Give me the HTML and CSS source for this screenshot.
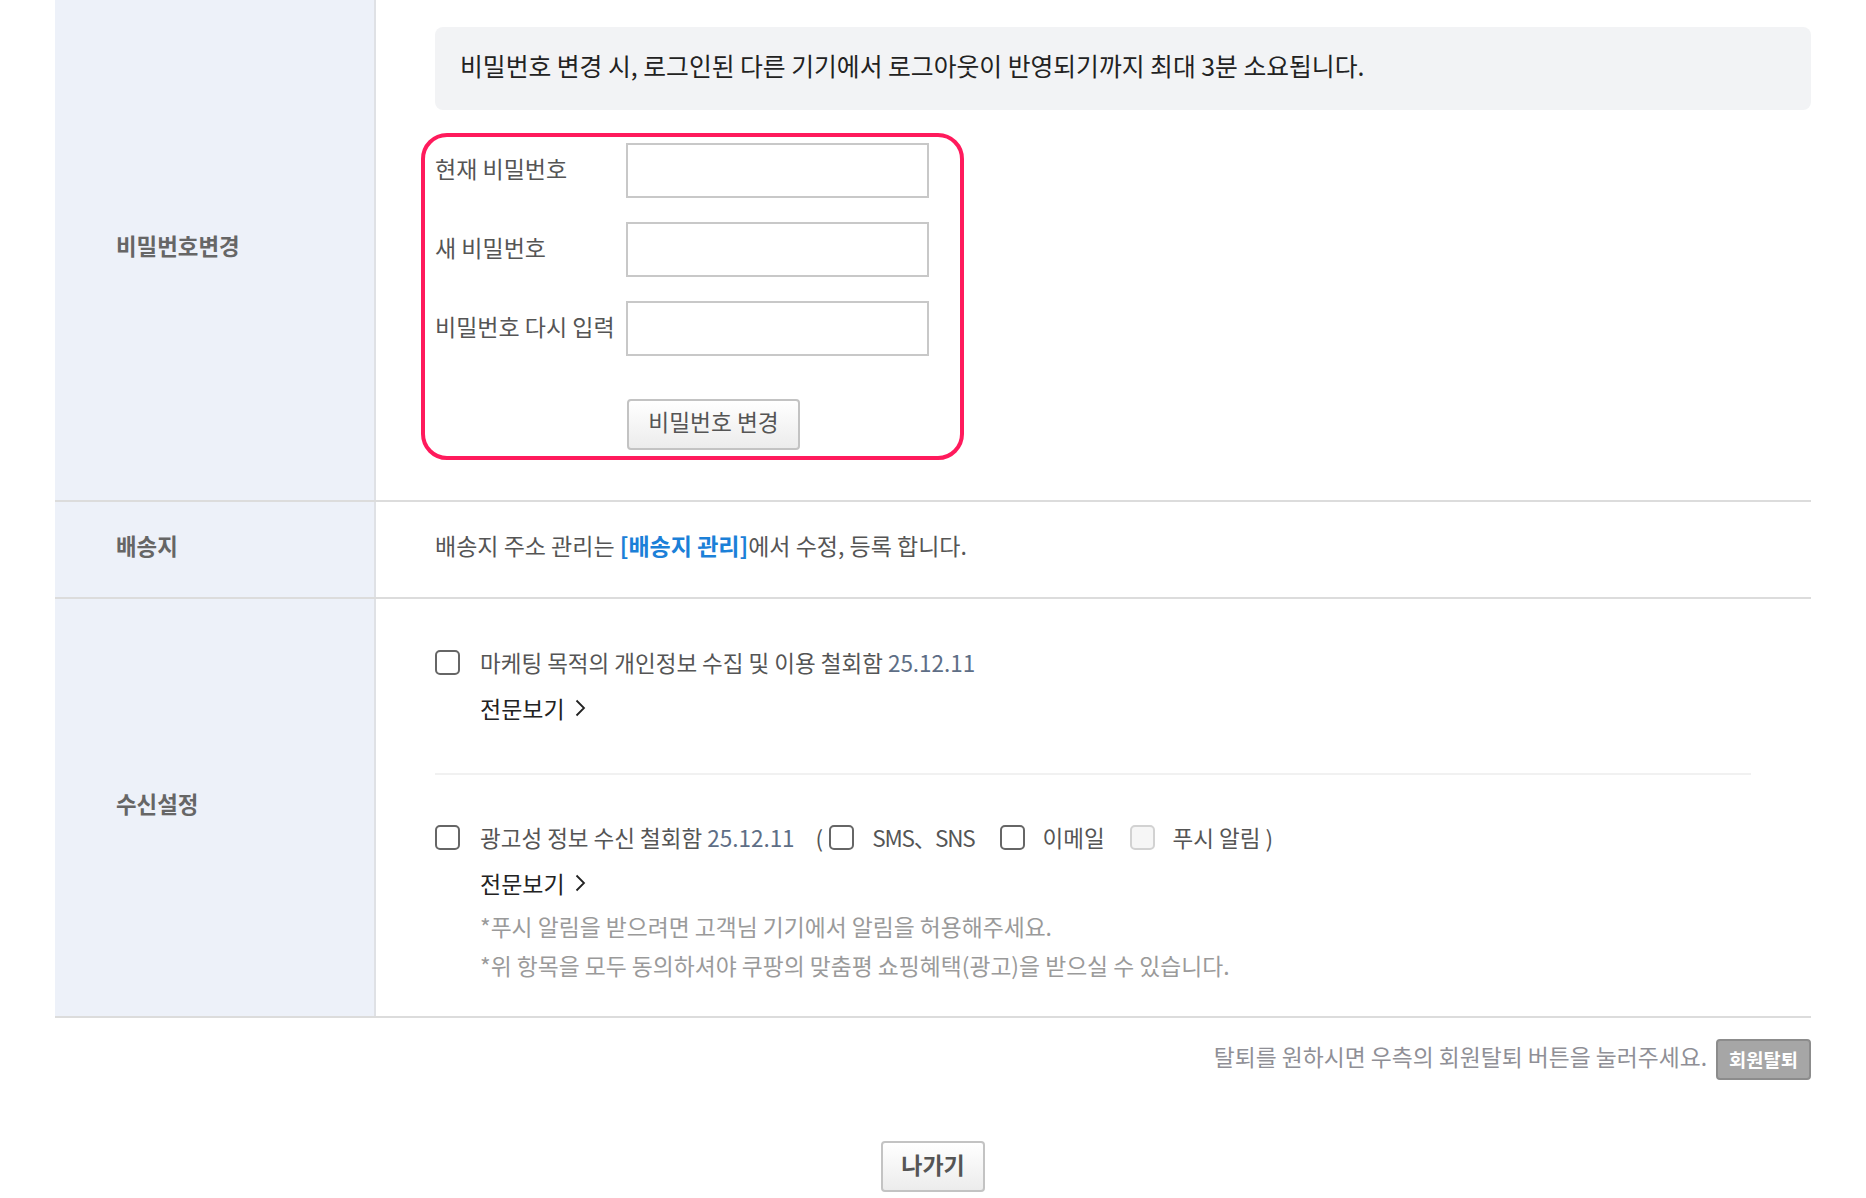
FILE: index.html
```html
<html>
  <head>
    <meta charset="utf-8" />
    <link rel="stylesheet" href="styles.css">
    <title>회원정보 수정</title>
  </head>

  <body>
    <div class="page">
      <div class="info-table">
        <div class="info-row row-password">
          <div class="info-label">비밀번호변경</div>
          <div class="info-cell">
            <p class="notice">비밀번호 변경 시, 로그인된 다른 기기에서 로그아웃이 반영되기까지 최대 3분 소요됩니다.</p>
            <form class="password-form">
              <label class="field-name" for="pw-now">현재 비밀번호</label>
              <input class="field-input" id="pw-now" type="password" />
              <label class="field-name" for="pw-new">새 비밀번호</label>
              <input class="field-input" id="pw-new" type="password" />
              <label class="field-name" for="pw-again">비밀번호 다시 입력</label>
              <input class="field-input" id="pw-again" type="password" />
              <button class="btn btn-change" type="button">비밀번호 변경</button>
            </form>
          </div>
        </div>

        <div class="info-row row-address">
          <div class="info-label">배송지</div>
          <div class="info-cell">
            배송지 주소 관리는&nbsp;<a class="link" href="#">[배송지 관리]</a>에서 수정, 등록 합니다.
          </div>
        </div>

        <div class="info-row row-consent">
          <div class="info-label">수신설정</div>
          <div class="info-cell">
            <div class="consent">
              <div class="consent-line">
                <input class="check" type="checkbox" />
                <span class="consent-text">마케팅 목적의 개인정보 수집 및 이용 철회함 <span class="date">25.12.11</span></span>
              </div>
              <a class="more" href="#">전문보기
                <svg width="12" height="18" viewBox="0 0 12 18"><path d="M2.5 1.5 L10 9 L2.5 16.5" fill="none" stroke="#222" stroke-width="1.8" /></svg>
              </a>
            </div>

            <div class="consent consent-ad">
              <div class="consent-line">
                <input class="check" type="checkbox" />
                <span class="consent-text">광고성 정보 수신 철회함 <span class="date">25.12.11</span></span>
                <span class="options">
                  <span class="paren">(</span>
                  <input class="check" type="checkbox" />
                  <span class="option-text latin">SMS、SNS</span>
                  <input class="check" type="checkbox" />
                  <span class="option-text">이메일</span>
                  <input class="check" type="checkbox" disabled />
                  <span class="option-text">푸시 알림 )</span>
                </span>
              </div>
              <a class="more" href="#">전문보기
                <svg width="12" height="18" viewBox="0 0 12 18"><path d="M2.5 1.5 L10 9 L2.5 16.5" fill="none" stroke="#222" stroke-width="1.8" /></svg>
              </a>
              <p class="hint">*푸시 알림을 받으려면 고객님 기기에서 알림을 허용해주세요.</p>
              <p class="hint">*위 항목을 모두 동의하셔야 쿠팡의 맞춤평 쇼핑혜택(광고)을 받으실 수 있습니다.</p>
            </div>
          </div>
        </div>
      </div>

      <div class="withdraw">
        <span class="withdraw-text">탈퇴를 원하시면 우측의 회원탈퇴 버튼을 눌러주세요.</span>
        <button class="btn-withdraw" type="button">회원탈퇴</button>
      </div>

      <div class="actions">
        <button class="btn btn-exit" type="button">나가기</button>
      </div>
    </div>
  </body>
</html>
```

FILE: styles.css
```css
body {
  margin: 0;
  font-family: "Noto Sans CJK KR", "Noto Sans", sans-serif;
  background-color: #fff;
  color: #555;
}
p {
  margin: 0;
}
a {
  text-decoration: none;
}
.page {
  width: 1756px;
  margin-left: 55px;
}
.info-row {
  display: grid;
  grid-template-columns: 321px 1fr;
  border-bottom: 2px solid #dcdcdc;
}
.info-label {
  display: flex;
  align-items: center;
  padding: 0 0 10px 61px;
  background-color: #edf1f9;
  border-right: 2px solid #dfe1e5;
  font-size: 22.4px;
  font-weight: 700;
  color: #666;
}
.info-cell {
  padding-left: 59px;
  font-size: 23px;
  line-height: 30px;
}

/* password */
.row-password .info-cell {
  padding-top: 27px;
  padding-bottom: 40px;
}
.notice {
  box-sizing: border-box;
  height: 83px;
  display: flex;
  align-items: center;
  padding: 0 0 7px 25px;
  background-color: #f2f3f5;
  border-radius: 8px;
  font-size: 24.8px;
  color: #222;
}
.password-form {
  display: grid;
  grid-template-columns: 191px 303px;
  row-gap: 24px;
  align-items: center;
  width: 494px;
  margin: 23px 0 0 -14px;
  padding: 6px 31px 6px 10px;
  border: 4px solid #ff1a5c;
  border-radius: 26px;
}
.field-name {
  padding-bottom: 5px;
  font-size: 23px;
  color: #555;
}
.field-input {
  box-sizing: border-box;
  height: 55px;
  margin: 0;
  border: 2px solid #c8c8c8;
  background: #fff;
}
.btn {
  box-sizing: border-box;
  font-family: inherit;
  background: linear-gradient(#ffffff, #ececec);
  border: 2px solid #c3c3c3;
  border-radius: 4px;
  color: #555;
  cursor: pointer;
}
.btn-change {
  grid-column: 2;
  justify-self: start;
  width: 173px;
  height: 51px;
  padding: 0 0 7px;
  margin: 19px 0 0 1px;
  font-size: 22.7px;
}

/* address */
.row-address .info-cell {
  box-sizing: border-box;
  display: flex;
  align-items: center;
  min-height: 95px;
  padding-bottom: 9px;
}
.link {
  color: #1b80d8;
  font-weight: 700;
}

/* consent */
.row-consent .info-cell {
  padding-top: 48px;
  padding-bottom: 31px;
}
.consent {
  padding-bottom: 50px;
  margin-right: 60px;
  border-bottom: 2px solid #f1f1f1;
}
.consent-ad {
  padding-top: 47px;
  padding-bottom: 0;
  border-bottom: 0;
}
.consent-line {
  display: flex;
  align-items: center;
  height: 30px;
  font-size: 22.5px;
  color: #555;
}
.check {
  appearance: none;
  box-sizing: border-box;
  width: 25px;
  height: 25px;
  margin: 0 20px 0 0;
  border: 2px solid #666;
  border-radius: 5px;
  background: #fff;
  flex-shrink: 0;
}
.check:disabled {
  border-color: #d2d2d2;
  background: #f6f6f6;
}
.date {
  color: #5e6e86;
}
.options {
  display: flex;
  align-items: center;
  margin-left: 21px;
}
.paren {
  margin-right: 6px;
}
.option-text {
  margin-right: 25px;
}
.latin {
  letter-spacing: -1.2px;
}
.options .check {
  margin-right: 18px;
}
.more {
  display: inline-flex;
  align-items: center;
  gap: 9px;
  margin: 16px 0 0 45px;
  line-height: 30px;
  color: #222;
}
.hint {
  margin-left: 45px;
  line-height: 39px;
  font-size: 22.8px;
  color: #9a9a9a;
}
.more + .hint {
  margin-top: 9px;
}

/* footer */
.withdraw {
  display: flex;
  justify-content: flex-end;
  align-items: center;
  gap: 9px;
  margin-top: 21px;
  font-size: 22.8px;
  color: #8f8f96;
}
.withdraw-text {
  padding-bottom: 6px;
}
.btn-withdraw {
  width: 95px;
  height: 41px;
  padding: 0 0 2px;
  font-family: inherit;
  font-size: 18.7px;
  font-weight: 700;
  color: #fff;
  background-color: #a6a6a6;
  border: 2px solid #8c8c8c;
  border-radius: 4px;
}
.actions {
  display: flex;
  justify-content: center;
  margin-top: 61px;
}
.btn-exit {
  width: 104px;
  height: 51px;
  padding: 0 0 5px;
  font-size: 23px;
  font-weight: 700;
}
```
